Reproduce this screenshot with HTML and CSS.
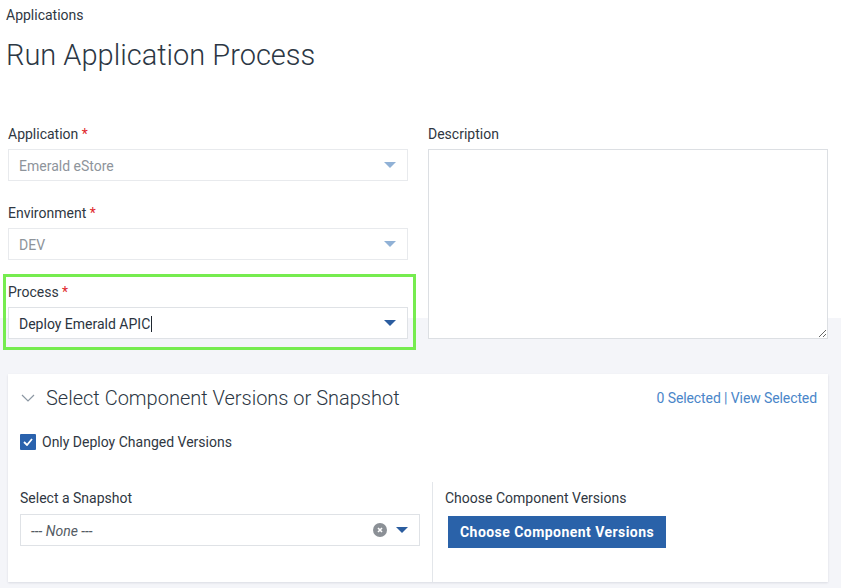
FILE: index.html
```html
<!DOCTYPE html>
<html lang="en">
<head>
<meta charset="utf-8">
<title>Run Application Process</title>
<link rel="stylesheet" href="styles.css">
</head>
<body>
<div class="breadcrumb">Applications</div>
<h1 class="page-title">Run Application Process</h1>

<div class="form">
  <div class="col">
    <div class="field">
      <div class="label">Application <span class="req">*</span></div>
      <div class="select disabled">
        <span class="value">Emerald eStore</span>
        <svg class="caret" width="12" height="6" viewBox="0 0 12 6"><path d="M0 0H12L6 6Z"/></svg>
      </div>
    </div>
    <div class="field">
      <div class="label">Environment <span class="req">*</span></div>
      <div class="select disabled">
        <span class="value">DEV</span>
        <svg class="caret" width="12" height="6" viewBox="0 0 12 6"><path d="M0 0H12L6 6Z"/></svg>
      </div>
    </div>
    <div class="field highlight">
      <div class="label">Process <span class="req">*</span></div>
      <div class="select active">
        <span class="value">Deploy Emerald APIC<span class="cursor"></span></span>
        <svg class="caret" width="12" height="6" viewBox="0 0 12 6"><path d="M0 0H12L6 6Z"/></svg>
      </div>
    </div>
  </div>
  <div class="col">
    <div class="field">
      <div class="label">Description</div>
      <textarea class="textarea"></textarea>
    </div>
  </div>
</div>

<section class="card">
  <div class="card-header">
    <svg class="chevron" width="14" height="8" viewBox="0 0 14 8"><path d="M1 1L7 7L13 1"/></svg>
    <h2 class="card-title">Select Component Versions or Snapshot</h2>
    <div class="selected-links">0 Selected | View Selected</div>
  </div>
  <div class="check-row">
    <span class="checkbox"><svg width="10" height="8" viewBox="0 0 10 8"><path d="M1 4L4 7L9 1"/></svg></span>
    <span class="check-label">Only Deploy Changed Versions</span>
  </div>
  <div class="split">
    <div class="split-col left">
      <div class="label">Select a Snapshot</div>
      <div class="select snapshot">
        <span class="value placeholder">--- None ---</span>
        <span class="clear"><svg width="6" height="6" viewBox="0 0 6 6"><path d="M1 1L5 5M5 1L1 5"/></svg></span>
        <svg class="caret" width="12" height="6" viewBox="0 0 12 6"><path d="M0 0H12L6 6Z"/></svg>
      </div>
    </div>
    <div class="split-col right">
      <div class="label">Choose Component Versions</div>
      <button class="btn">Choose Component Versions</button>
    </div>
  </div>
</section>
</body>
</html>
```

FILE: styles.css
```css
html, body {
  margin: 0;
  padding: 0;
}
body {
  font-family: Roboto, "Liberation Sans", sans-serif;
  font-size: 14px;
  color: #2f3742;
  background: linear-gradient(#ffffff 0, #ffffff 318px, #f4f5f9 318px);
  min-height: 588px;
  overflow: hidden;
}
.breadcrumb {
  padding: 7px 6px 0;
  line-height: 16px;
  color: #2f3742;
}
.page-title {
  margin: 16px 0 0 6px;
  font-size: 29px;
  line-height: 32px;
  font-weight: 300;
  color: #2c3744;
}
.form {
  display: grid;
  grid-template-columns: 400px 400px;
  column-gap: 20px;
  margin-top: 55px;
  padding-left: 8px;
}
.col {
  display: flex;
  flex-direction: column;
  gap: 24px;
}
.field {
  display: flex;
  flex-direction: column;
  position: relative;
}
.label {
  line-height: 16px;
  margin-bottom: 7px;
  color: #2f3742;
}
.req {
  color: #e0262b;
}
.select {
  box-sizing: border-box;
  height: 32px;
  border: 1px solid #dfe2e6;
  background: #fff;
  display: flex;
  align-items: center;
  padding: 0 11px 0 10px;
}
.select .value {
  flex: 1;
  line-height: 16px;
  padding-top: 2px;
  display: flex;
  align-items: center;
}
.select.disabled {
  border-color: #e8eaed;
}
.select.disabled .value {
  color: #8e949b;
}
.select.disabled .caret {
  fill: #90b1d6;
}
.select.active .value {
  color: #2b3440;
}
.caret {
  fill: #2b5d9f;
  display: block;
}
.cursor {
  display: inline-block;
  width: 1px;
  height: 16px;
  background: #1f2730;
  margin-left: 1px;
}
.highlight::after {
  content: "";
  position: absolute;
  top: -10px;
  left: -5px;
  right: -8px;
  bottom: -11px;
  border: 3px solid #76ec4f;
  pointer-events: none;
}
.textarea {
  box-sizing: border-box;
  height: 190px;
  width: 400px;
  border: 1px solid #dcdfe3;
  margin: 0;
  padding: 6px 10px;
  font: inherit;
  resize: both;
  background: #fff;
}
.card {
  margin: 35px 0 0 8px;
  width: 820px;
  height: 208px;
  box-sizing: border-box;
  background: #fff;
  box-shadow: 0 1px 2px rgba(40, 50, 70, 0.12);
  display: flex;
  flex-direction: column;
}
.card-header {
  display: flex;
  align-items: center;
  padding: 12px 11px 0 13px;
}
.chevron {
  fill: none;
  stroke: #8c97a3;
  stroke-width: 1.2;
  margin-right: 11px;
  display: block;
}
.card-title {
  flex: 1;
  margin: 0;
  font-size: 20px;
  line-height: 24px;
  font-weight: 300;
  color: #2c3744;
}
.selected-links {
  color: #4a86c9;
  line-height: 16px;
  letter-spacing: -0.1px;
}
.check-row {
  display: flex;
  align-items: center;
  gap: 6px;
  margin: 23px 0 0 12px;
}
.checkbox {
  width: 16px;
  height: 16px;
  background: #2a62ad;
  border-radius: 1px;
  display: flex;
  align-items: center;
  justify-content: center;
}
.checkbox svg {
  fill: none;
  stroke: #fff;
  stroke-width: 1.8;
}
.check-label {
  line-height: 16px;
  padding-top: 1px;
}
.split {
  display: grid;
  grid-template-columns: 425px 1fr;
  margin-top: 32px;
  flex: 1;
}
.split-col {
  padding-top: 8px;
  display: flex;
  flex-direction: column;
  align-items: flex-start;
}
.split-col.left {
  padding-left: 12px;
  border-right: 1px solid #e3e6ea;
}
.split-col.left .select {
  width: 400px;
}
.split-col.left .label,
.split-col.right .label {
  margin-bottom: 8px;
}
.split-col.right {
  padding-left: 12px;
}
.placeholder {
  font-style: italic;
  color: #555c64;
}
.clear {
  width: 14px;
  height: 14px;
  border-radius: 50%;
  background: #8b9096;
  display: flex;
  align-items: center;
  justify-content: center;
  margin-right: 9px;
}
.clear svg {
  stroke: #fff;
  stroke-width: 1.6;
  fill: none;
  display: block;
}
.btn {
  margin: 2px 0 0 3px;
  height: 32px;
  padding: 0 12px;
  border: 0;
  background: #2a62a9;
  color: #fff;
  font-family: Roboto, "Liberation Sans", sans-serif;
  font-size: 14px;
  font-weight: 700;
  letter-spacing: 0.45px;
}
```
